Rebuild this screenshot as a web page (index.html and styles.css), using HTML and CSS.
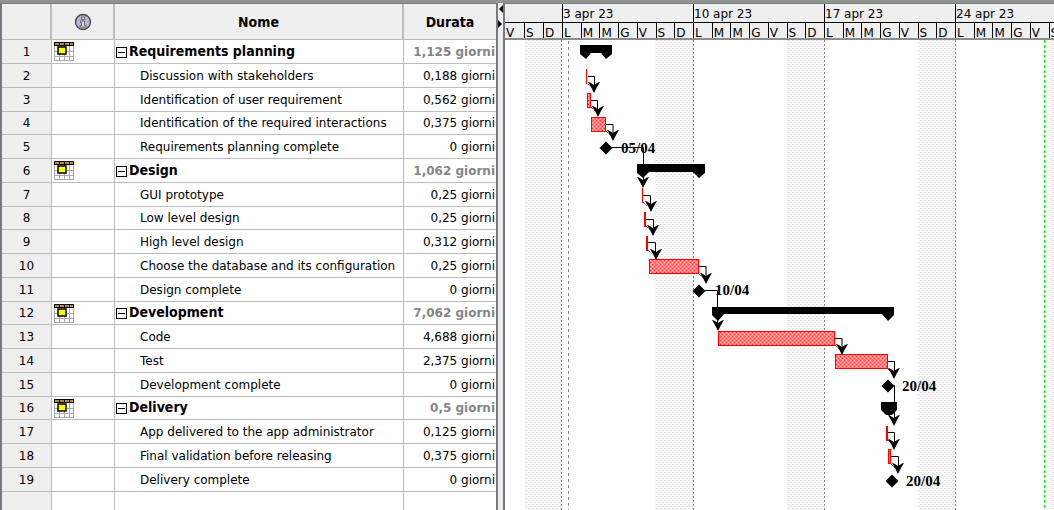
FILE: index.html
```
<!DOCTYPE html>
<html lang="it">
<head>
<meta charset="utf-8">
<title>Gantt</title>
<link rel="stylesheet" href="styles.css">
</head>
<body>
<svg class="defs" aria-hidden="true">
  <symbol id="calendar" viewBox="0 0 20 19">
    <path fill="#fff" d="M0 0h20v19H0z"/>
    <path fill="none" stroke="#aaa" d="M.5 4v15M5.500 4v15M10.500 4v15M15.500 4v15M19.500 4v15M0 9.500h20M0 14.500h20M0 18.500h20"/>
    <path d="M0 0h20v4H0z"/>
    <path fill="#b98a3c" d="M1 1h4v2H1zM6 1h4v2H6zM11 1h4v2h-4zM16 1h3v2h-3z"/>
    <rect x="4" y="5" width="8" height="7" fill="#ff0" stroke="#000" stroke-width="1.500"/>
  </symbol>
</svg>
<main class="app">
  <section class="sheet">
    <table class="tasks">
      <colgroup><col class="c-num"><col class="c-info"><col><col class="c-dur"></colgroup>
      <thead>
        <tr>
          <th></th>
          <th><svg class="info" viewBox="0 0 18 18" role="img" aria-label="Info"><circle cx="9" cy="9" r="7.500" fill="#b9b5d3" stroke="#444" stroke-width="1.300"/><path d="M7.500 4h3v2.500h-3zM6.500 8h4v4.500h1.500V14h-6v-1.500h1.500v-3h-1z" fill="#d9d7e8" stroke="#555" stroke-width=".8"/></svg></th>
          <th>Nome</th>
          <th>Durata</th>
        </tr>
      </thead>
      <tbody>
        <tr class="group"><td>1</td><td><svg class="cal"><use href="#calendar"/></svg></td><td><button class="toggle" aria-label="Comprimi"></button>Requirements planning</td><td>1,125 giorni</td></tr>
        <tr><td>2</td><td></td><td>Discussion with stakeholders</td><td>0,188 giorni</td></tr>
        <tr><td>3</td><td></td><td>Identification of user requirement</td><td>0,562 giorni</td></tr>
        <tr><td>4</td><td></td><td>Identification of the required interactions</td><td>0,375 giorni</td></tr>
        <tr><td>5</td><td></td><td>Requirements planning complete</td><td>0 giorni</td></tr>
        <tr class="group"><td>6</td><td><svg class="cal"><use href="#calendar"/></svg></td><td><button class="toggle" aria-label="Comprimi"></button>Design</td><td>1,062 giorni</td></tr>
        <tr><td>7</td><td></td><td>GUI prototype</td><td>0,25 giorni</td></tr>
        <tr><td>8</td><td></td><td>Low level design</td><td>0,25 giorni</td></tr>
        <tr><td>9</td><td></td><td>High level design</td><td>0,312 giorni</td></tr>
        <tr><td>10</td><td></td><td>Choose the database and its configuration</td><td>0,25 giorni</td></tr>
        <tr><td>11</td><td></td><td>Design complete</td><td>0 giorni</td></tr>
        <tr class="group"><td>12</td><td><svg class="cal"><use href="#calendar"/></svg></td><td><button class="toggle" aria-label="Comprimi"></button>Development</td><td>7,062 giorni</td></tr>
        <tr><td>13</td><td></td><td>Code</td><td>4,688 giorni</td></tr>
        <tr><td>14</td><td></td><td>Test</td><td>2,375 giorni</td></tr>
        <tr><td>15</td><td></td><td>Development complete</td><td>0 giorni</td></tr>
        <tr class="group"><td>16</td><td><svg class="cal"><use href="#calendar"/></svg></td><td><button class="toggle" aria-label="Comprimi"></button>Delivery</td><td>0,5 giorni</td></tr>
        <tr><td>17</td><td></td><td>App delivered to the app administrator</td><td>0,125 giorni</td></tr>
        <tr><td>18</td><td></td><td>Final validation before releasing</td><td>0,375 giorni</td></tr>
        <tr><td>19</td><td></td><td>Delivery complete</td><td>0 giorni</td></tr>
        <tr><td></td><td></td><td></td><td></td></tr>
      </tbody>
    </table>
  </section>
  <div class="splitter"><svg class="grips" viewBox="0 0 5 30" aria-hidden="true"><path d="M5 2v8L1 6zM0 17v8l4-4z"/></svg></div>
  <section class="gantt">
    <header class="scale">
      <div class="week first"><div class="date"></div><div class="days"><span>V</span><span>S</span><span>D</span></div></div>
      <div class="week"><div class="date">3 apr 23</div><div class="days"><span>L</span><span>M</span><span>M</span><span>G</span><span>V</span><span>S</span><span>D</span></div></div>
      <div class="week"><div class="date">10 apr 23</div><div class="days"><span>L</span><span>M</span><span>M</span><span>G</span><span>V</span><span>S</span><span>D</span></div></div>
      <div class="week"><div class="date">17 apr 23</div><div class="days"><span>L</span><span>M</span><span>M</span><span>G</span><span>V</span><span>S</span><span>D</span></div></div>
      <div class="week"><div class="date">24 apr 23</div><div class="days"><span>L</span><span>M</span><span>M</span><span>G</span><span>V</span><span>S</span></div></div>
    </header>
    <svg class="chart">
      <defs>
        <pattern id="dots" width="4" height="4" patternUnits="userSpaceOnUse"><path fill="#f8f8f8" d="M0 0h4v4H0z"/><path fill="#dcdcdc" d="M0 0h1v1H0zM2 2h1v1H2z"/><path fill="#ebebeb" d="M1 0h1v1H1zM3 2h1v1H3z"/></pattern>
        <pattern id="hatch" width="4" height="4" patternUnits="userSpaceOnUse"><path fill="#ff8080" d="M0 0h4v4H0z"/><path fill="#ff3c3c" d="M0 0h1v1H0zM2 2h1v1H2z"/><path fill="#ffb4b4" d="M2 0h1v1H2zM0 2h1v1H0z"/></pattern>
        <path id="tip" d="M-6-10L-4-9.500L0-7L4-9.500L6-10L3-5L0 1L-3-5z"/>
        <path id="stone" d="M0-6.500L6.500 0L0 6.500L-6.500 0z"/>
      </defs>
      <g transform="translate(-505 -40)">
        <g fill="url(#dots)">
          <rect x="525" y="40" width="37" height="1000"/>
          <rect x="655" y="40" width="38" height="1000"/>
          <rect x="787" y="40" width="37" height="1000"/>
          <rect x="918" y="40" width="37" height="1000"/>
          <rect x="1050" y="40" width="37" height="1000"/>
        </g>
        <path class="weekline" d="M561.500 40v1000M693.500 40v1000M824.500 40v1000M955.500 40v1000"/>
        <path class="startline" d="M568.500 41v1000"/>
        <path class="today" d="M1044.500 40v1000"/>
        <g class="bars">
          <path d="M586.500 69v15"/>
          <rect x="587.500" y="93.500" width="3" height="14"/>
          <rect x="591.500" y="117.500" width="14" height="14"/>
          <path d="M642.500 188v15"/>
          <rect x="644.500" y="212.500" width="1" height="14"/>
          <rect x="646.500" y="236.500" width="1" height="14"/>
          <rect x="649.500" y="259.500" width="49" height="14"/>
          <rect x="718.500" y="331.500" width="116" height="14"/>
          <rect x="835.500" y="354.500" width="52" height="14"/>
          <rect x="886.500" y="426.500" width="1" height="14"/>
          <rect x="888.500" y="449.500" width="2" height="14"/>
        </g>
        <path d="M580 45h32v9l-6 5l-5-6h-10l-5 6l-6-5z"/>
        <path d="M637 164h68v9l-6 5l-6-6h-44l-6 6l-6-5z"/>
        <path d="M712 307h182v8l-6 6l-6-7H724l-6 7l-6-6z"/>
        <path d="M881 402h16v8l-5 5h-6l-5-5z"/>
        <path class="links" d="M588 76.500h6.500V90M591 100.500h6.500V112M606 124.500h7V136M612 147.500h31.500V184M643 195.500h7.500V208M646 219.500h7.500V232M648 242.500h7.500V256M699 266.500h7V280M705 290.500h12.500V327M835 338.500h7V350M888 361.500h6.500V374M893 385.500h1.500V422M888 432.500h6.500V446M891 456.500h7.500V470"/>
        <path class="backs" d="M588 84l4 3M591 107l4 4M606 131l4 4M643 202l4 4M646 226l4 4M648 250l4 4M699 274l4 4M835 345l4 4M888 369l4 4M888 414l4 5M888 440l4 4M891 464l4 4"/>
        <use href="#tip" x="594" y="92"/><use href="#tip" x="598" y="116"/><use href="#tip" x="613" y="140"/>
        <use href="#tip" x="643" y="187"/><use href="#tip" x="651" y="211"/><use href="#tip" x="653" y="235"/>
        <use href="#tip" x="656" y="259"/><use href="#tip" x="706" y="283"/><use href="#tip" x="718" y="330"/>
        <use href="#tip" x="842" y="354"/><use href="#tip" x="894" y="378"/><use href="#tip" x="894" y="425"/>
        <use href="#tip" x="894" y="449"/><use href="#tip" x="898" y="473"/>
        <use href="#stone" x="606" y="148"/><use href="#stone" x="699" y="291"/><use href="#stone" x="888" y="386"/><use href="#stone" x="892" y="481"/>
        <g class="labels">
          <text x="621" y="153">05/04</text>
          <text x="715" y="295">10/04</text>
          <text x="902" y="391">20/04</text>
          <text x="906" y="486">20/04</text>
        </g>
      </g>
    </svg>
  </section>
</main>
</body>
</html>
```
FILE: styles.css
```
* { box-sizing: border-box; }
body {
  margin: 0;
  overflow: hidden;
  background: #f0f0f0;
  color: #000;
  font: 12px/16px "DejaVu Sans", sans-serif;
}
.defs { position: absolute; width: 0; height: 0; }
.app {
  display: grid;
  grid-template-columns: 498px 5px minmax(0, 1fr);
  height: 100vh;
  border-top: 3px solid #92948f;
}
.sheet {
  overflow: hidden;
  background: #fff;
  border: solid #747a80;
  border-width: 1px 2px 0 2px;
}
.tasks {
  width: 100%;
  table-layout: fixed;
  border-collapse: separate;
  border-spacing: 0;
}
.c-num { width: 50px; }
.c-info { width: 63px; }
.c-dur { width: 92px; }
th, td {
  padding: 0;
  border: solid #bcbcbc;
  border-width: 0 1px 1px 0;
  white-space: nowrap;
}
th {
  height: 36px;
  background: #efefef;
  border-right-width: 2px;
}
th, .group td:nth-child(3) {
  font: bold 14px/16px "DejaVu Sans Condensed", "DejaVu Sans", sans-serif;
}
th:last-child, td:last-child { border-right: 0; }
td { height: 24px; }
tbody tr:nth-child(4n) td { height: 23px; }
td:first-child { background: #efefef; text-align: center; }
td:nth-child(2) { padding-left: 2px; }
td:nth-child(3) { padding-left: 25px; }
td:last-child { padding-right: 1px; text-align: right; }
.group td:nth-child(3) { padding: 0 0 2px 1px; }
.group td:last-child { color: #858585; font-weight: bold; }
.info { display: block; width: 18px; height: 18px; margin: 0 auto; }
.cal { display: block; width: 20px; height: 19px; }
.toggle {
  width: 11px;
  height: 11px;
  margin: 0 2px 0 0;
  padding: 0;
  border: 1px solid #000;
  background: linear-gradient(#000, #000) center / 7px 1px no-repeat #fff;
  vertical-align: -1px;
}
.splitter { background: #efefef; }
.grips { display: block; width: 5px; height: 30px; }
.gantt {
  display: flex;
  flex-direction: column;
  overflow: hidden;
  border: solid #747a80;
  border-width: 1px 0 0 2px;
  background: #fff;
}
.scale {
  display: flex;
  flex: none;
  height: 36px;
  background: #efefef;
  border-bottom: 2px solid #8c8c8c;
}
.week { flex: none; width: 131px; }
.first { width: 57px; }
.date {
  height: 19px;
  padding-top: 2px;
  border-bottom: 1px solid #000;
}
.week:not(.first) .date { border-left: 1px solid #000; }
.days { display: grid; grid-template-columns: repeat(7, 1fr); }
.first .days { grid-template-columns: repeat(3, 1fr); }
.days span { height: 15px; padding: 2px 0 0 1px; border-left: 1px solid #000; }
.first .days span:first-child { border-left: 0; }
.chart { display: block; flex: 1; width: 100%; min-height: 0; }
.weekline { stroke: #888; stroke-dasharray: 2 2; }
.startline { stroke: #888; stroke-dasharray: 3 3; }
.today { stroke: #0f0; stroke-dasharray: 3 2; }
.bars { fill: url(#hatch); stroke: #f00; }
.links { fill: none; stroke: #000; }
.backs { fill: none; stroke: #000; stroke-dasharray: 1 1; }
.labels { font: bold 15px "Liberation Serif", serif; }
```
